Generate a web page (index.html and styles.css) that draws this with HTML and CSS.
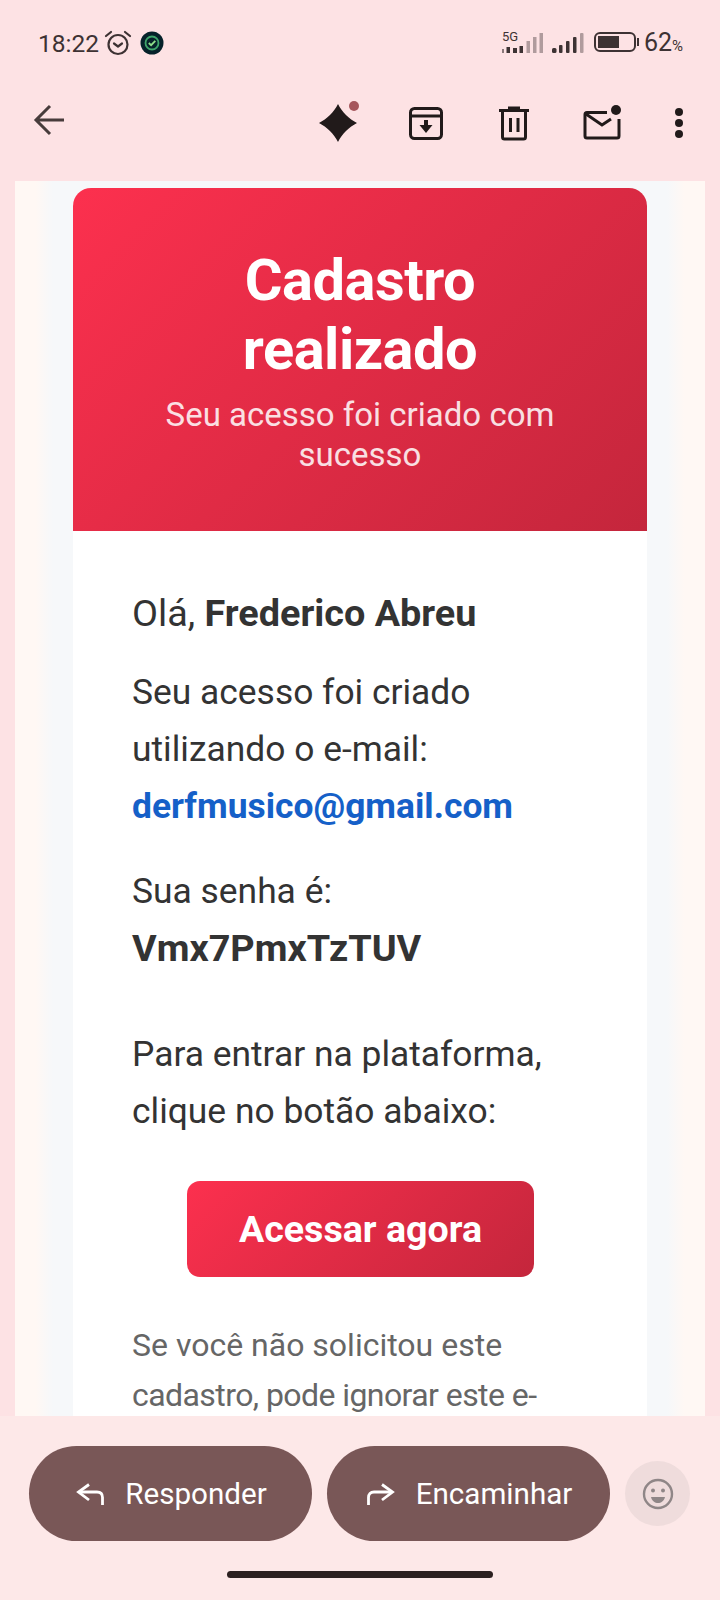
FILE: index.html
```html
<!DOCTYPE html>
<html lang="pt">

<head>
  <meta charset="UTF-8">
  <meta name="viewport" content="width=device-width, initial-scale=1.0">
  <title>Cadastro realizado</title>
  <link rel="stylesheet" href="styles.css">
</head>

<body>
  <div class="status-bar">
    <div class="status-left">
      <span class="clock">18:22</span>
      <svg class="alarm" width="28" height="28" viewBox="0 0 28 28" fill="none" stroke="#3d3233" stroke-width="2.2">
        <circle cx="14" cy="15.5" r="9.5" />
        <path d="M10 14.500l4 3 4-3" stroke-linecap="round" stroke-linejoin="round" />
        <path d="M2 7l5-4M26 7l-5-4" stroke-linecap="round" />
      </svg>
      <svg class="app-badge" width="24" height="24" viewBox="0 0 24 24" fill="none">
        <circle cx="12" cy="12" r="11.5" fill="#06222a" />
        <circle cx="12" cy="12" r="6.5" stroke="#3fa56b" stroke-width="1.8" />
        <path d="M8.800 12l2.300 2.200 4.200-4.400" stroke="#8ee08a" stroke-width="1.8" />
      </svg>
    </div>
    <div class="status-right">
      <div class="signal-5g">
        <span class="label-5g">5G</span>
        <svg width="42" height="21" viewBox="0 0 42 21" fill="#3d3233">
          <rect x="1" y="17" width="2" height="4" opacity=".6" />
          <rect x="5.500" y="15" width="3.500" height="6" />
          <rect x="12" y="16" width="4" height="5" />
          <rect x="18.500" y="14" width="3.500" height="7" />
          <rect x="25.500" y="9" width="3.500" height="12" opacity=".4" />
          <rect x="32" y="5" width="3.500" height="16" opacity=".4" />
          <rect x="38.500" y="1" width="3.500" height="20" opacity=".4" />
        </svg>
      </div>
      <svg class="signal" width="32" height="21" viewBox="0 0 32 21" fill="#3d3233">
        <rect x="0" y="16" width="4.500" height="5" rx="1.500" />
        <rect x="7" y="13" width="3.500" height="8" rx="1" />
        <rect x="14" y="9" width="3.500" height="12" rx="1" />
        <rect x="21" y="5" width="3.500" height="16" rx="1" />
        <rect x="28" y="1" width="3.500" height="20" rx="1" opacity=".4" />
      </svg>
      <div class="battery">
        <div class="battery-body"><div class="battery-fill"></div></div>
        <div class="battery-tip"></div>
      </div>
      <span class="percent">62<small>%</small></span>
    </div>
  </div>

  <div class="toolbar">
    <svg class="back" width="36" height="36" viewBox="0 0 36 36" fill="none" stroke="#473b3b" stroke-width="3">
      <path d="M33 18H5M19 4L5 18l14 14" />
    </svg>
    <div class="actions">
      <div class="icon-cell">
        <div class="gem">
          <svg width="38" height="38" viewBox="0 0 38 38" fill="#211a1a">
            <path d="M19 0C23 8 30 15 38 19 30 23 23 30 19 38 15 30 8 23 0 19 8 15 15 8 19 0Z" />
          </svg>
          <span class="gem-dot"></span>
        </div>
      </div>
      <div class="icon-cell">
        <svg width="36" height="36" viewBox="0 0 36 36" fill="none" stroke="#211a1a" stroke-width="3">
          <rect x="2.500" y="3.500" width="31" height="30" rx="4" />
          <path d="M2.500 11h31" />
          <path d="M18 15v8" stroke-width="4" />
          <path d="M11.500 20h13L18 28z" fill="#211a1a" stroke="none" />
        </svg>
      </div>
      <div class="icon-cell">
        <svg width="36" height="36" viewBox="0 0 36 36" fill="none" stroke="#211a1a" stroke-width="3">
          <path d="M3 5.500h30M12 3h12" />
          <path d="M6.500 6v26a2 2 0 0 0 2 2h19a2 2 0 0 0 2-2V6" />
          <path d="M14.500 13v14M22 13v14" />
        </svg>
      </div>
      <div class="icon-cell">
        <svg width="40" height="36" viewBox="0 0 40 36" fill="none" stroke="#211a1a" stroke-width="3">
          <path d="M25 7.500H5a2 2 0 0 0-2 2V31a2 2 0 0 0 2 2h30a2 2 0 0 0 2-2V14" />
          <path d="M4 9l16 11 9-6" />
          <circle cx="34" cy="5" r="5" fill="#211a1a" stroke="none" />
        </svg>
      </div>
      <div class="icon-cell more-cell">
        <div class="more"><span></span><span></span><span></span></div>
      </div>
    </div>
  </div>

  <div class="message">
    <div class="mail-bg">
      <div class="card">
        <div class="card-header">
          <h1>Cadastro realizado</h1>
          <p>Seu acesso foi criado com sucesso</p>
        </div>
        <div class="card-body">
          <p class="greeting">Olá, <strong>Frederico Abreu</strong></p>
          <p class="block-email">Seu acesso foi criado utilizando o e-mail:<br><a href="#" class="mail-link">derfmusico@gmail.com</a></p>
          <p class="block-pass">Sua senha é:<br><strong class="pass">Vmx7PmxTzTUV</strong></p>
          <p class="block-enter">Para entrar na plataforma, clique no botão abaixo:</p>
          <div class="btn-wrap"><a href="#" class="btn">Acessar agora</a></div>
          <p class="note">Se você não solicitou este<br><span class="note-tight">cadastro, pode ignorar este e-</span></p>
        </div>
      </div>
    </div>
  </div>

  <div class="bottom-bar">
    <div class="pill">
      <svg width="28" height="22" viewBox="0 0 28 22" fill="none" stroke="#fff" stroke-width="2.800">
        <path d="M13 1.500L2.500 9 13 17" />
        <path d="M3 9h18c3.500 0 5.500 2 5.500 5.500V22" />
      </svg>
      <span>Responder</span>
    </div>
    <div class="pill">
      <svg width="28" height="22" viewBox="0 0 28 22" fill="none" stroke="#fff" stroke-width="2.800">
        <path d="M15 1.500L25.500 9 15 17" />
        <path d="M25 9H7c-3.500 0-5.500 2-5.500 5.500V22" />
      </svg>
      <span>Encaminhar</span>
    </div>
    <div class="emoji">
      <svg width="32" height="32" viewBox="0 0 32 32" fill="none" stroke="#8f8687" stroke-width="2.400">
        <circle cx="16" cy="16" r="14" />
        <circle cx="11" cy="12.500" r="2" fill="#8f8687" stroke="none" />
        <circle cx="21" cy="12.500" r="2" fill="#8f8687" stroke="none" />
        <path d="M9 19h14c-1 4-4 6-7 6s-6-2-7-6z" fill="#8f8687" stroke="none" />
      </svg>
    </div>
  </div>
  <div class="home-area"><div class="home-bar"></div></div>
</body>

</html>
```
FILE: styles.css
```css
* {
  margin: 0;
  padding: 0;
  box-sizing: border-box;
}

body {
  width: 720px;
  height: 1600px;
  display: flex;
  flex-direction: column;
  overflow: hidden;
  background-color: #fde2e4;
  font-family: Roboto, "Liberation Sans", sans-serif;
}

.status-bar {
  height: 78px;
  padding: 24px 37px 0 38px;
  display: flex;
  justify-content: space-between;
  align-items: flex-start;
  color: #3d3233;
}

.status-left {
  display: flex;
  align-items: center;
}

.clock {
  padding-top: 2px;
  font-size: 24.500px;
  line-height: 36px;
}

.alarm {
  margin-left: 5px;
}

.app-badge {
  margin-left: 8px;
}

.status-right {
  display: flex;
  align-items: flex-start;
  gap: 9px;
  padding-top: 8px;
}

.signal-5g {
  position: relative;
  width: 42px;
  height: 21px;
}

.label-5g {
  position: absolute;
  left: 1px;
  top: -2px;
  font-size: 13px;
  line-height: 14px;
}

.battery {
  display: flex;
  align-items: center;
  gap: 1px;
  margin-left: 1px;
}

.battery-body {
  width: 42px;
  height: 20px;
  border: 2.500px solid #3d3233;
  border-radius: 6px;
  padding: 2px;
}

.battery-fill {
  width: 62%;
  height: 100%;
  background-color: #3d3233;
}

.battery-tip {
  width: 2px;
  height: 8px;
  background-color: #3d3233;
}

.percent {
  margin: -7px 0 0 -4px;
  font-size: 25px;
  line-height: 36px;
}

.percent small {
  font-size: 15px;
}

.toolbar {
  height: 103px;
  padding: 5px 8px 19px 31px;
  display: flex;
  justify-content: space-between;
  align-items: center;
}

.back {
  margin-bottom: 5px;
}

.actions {
  display: flex;
  align-items: center;
}

.icon-cell {
  width: 88px;
  display: flex;
  align-items: center;
  justify-content: center;
}

.more-cell {
  width: 66px;
}

.gem {
  position: relative;
  width: 38px;
  height: 38px;
}

.gem-dot {
  position: absolute;
  right: -2px;
  top: -3px;
  width: 10px;
  height: 10px;
  border-radius: 50%;
  background-color: #a5565c;
}

.more span {
  display: block;
  width: 8px;
  height: 8px;
  border-radius: 50%;
  background-color: #211a1a;
  margin: 3px 0;
}

.message {
  height: 1235px;
  margin: 0 15px;
  overflow: hidden;
  background: linear-gradient(90deg, #fff8f4 0, #fff8f4 3%, #f6f8fa 5.5%, #f6f8fa 94.5%, #fff8f4 97%, #fff8f4 100%);
}

.mail-bg {
  padding: 7px 58px 0;
}

.card {
  background-color: #fff;
  border-radius: 18px 18px 0 0;
}

.card-header {
  height: 343px;
  padding: 58px 70px 0;
  text-align: center;
  color: #fff;
  border-radius: 18px 18px 0 0;
  background: linear-gradient(135deg, #fc304e 0%, #c4263c 100%);
}

.card-header h1 {
  font-size: 57.800px;
  line-height: 69px;
  font-weight: 700;
  letter-spacing: -0.5px;
}

.card-header p {
  margin: 11px -30px 0;
  font-size: 33px;
  line-height: 40px;
  opacity: .85;
}

.card-body {
  padding: 54px 58px 60px 59px;
  color: #333;
  font-size: 35.400px;
  line-height: 57px;
}

.greeting {
  font-size: 37.800px;
}

.block-email {
  margin-top: 22px;
}

.block-pass {
  margin-top: 28px;
}

.pass {
  font-size: 37.800px;
}

.block-enter {
  margin-top: 48px;
}

.mail-link {
  color: #1560c8;
  font-weight: 700;
  text-decoration: none;
}

.btn-wrap {
  margin-top: 41px;
  text-align: center;
}

.btn {
  display: inline-block;
  width: 347px;
  height: 96px;
  line-height: 96px;
  border-radius: 13px;
  color: #fff;
  font-size: 37.600px;
  font-weight: 700;
  text-decoration: none;
  background: linear-gradient(135deg, #fc304e 0%, #c4263c 100%);
}

.note {
  margin-top: 43px;
  color: #666;
  font-size: 32px;
  line-height: 50px;
}

.note-tight {
  letter-spacing: -0.57px;
}

.bottom-bar {
  height: 155px;
  padding: 30px 30px 0 29px;
  display: flex;
  align-items: flex-start;
  gap: 15px;
  background-color: #fde8e8;
}

.pill {
  width: 283px;
  height: 95px;
  padding-left: 2px;
  border-radius: 48px;
  background-color: #795757;
  color: #fff;
  font-size: 29.600px;
  display: flex;
  align-items: center;
  justify-content: center;
  gap: 21px;
}

.emoji {
  width: 65px;
  height: 65px;
  margin-top: 15px;
  border-radius: 50%;
  background-color: #efdcdc;
  display: flex;
  align-items: center;
  justify-content: center;
}

.home-area {
  height: 29px;
  background-color: #fde8e8;
}

.home-bar {
  width: 266px;
  height: 7px;
  margin-left: 227px;
  border-radius: 4px;
  background-color: #2c2020;
}
```
